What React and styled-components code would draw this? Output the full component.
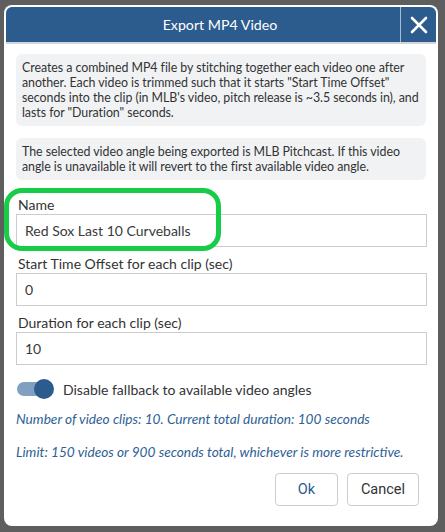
import React from 'react';
import styled, { createGlobalStyle } from 'styled-components';

const Global = createGlobalStyle`
  html, body {
    margin: 0;
    padding: 0;
    background: #5e5e5e;
    font-family: Lato, "Open Sans", sans-serif;
  }
  * { box-sizing: border-box; }
`;

const Page = styled.div`
  position: relative;
  width: 445px;
  height: 532px;
  padding: 5px 7px 6px 4px;
`;

const Dialog = styled.div`
  width: 434px;
  height: 521px;
  background: #fff;
  border-radius: 8px;
  padding: 2px;
  display: flex;
  flex-direction: column;
`;

const Header = styled.div`
  height: 37px;
  background: #2c5b8e;
  border-radius: 6px 6px 0 0;
  border-bottom: 2px solid #d2d6dc;
  display: flex;
  align-items: stretch;
  color: #fff;
`;

const Title = styled.div`
  flex: 1;
  display: flex;
  align-items: center;
  justify-content: center;
  font-size: 14.2px;
  padding-left: 34px;
`;

const Close = styled.div`
  width: 36px;
  border-left: 1px solid #a9bbd0;
  display: flex;
  align-items: center;
  justify-content: center;
`;

const Body = styled.div`
  padding: 10px 10px 0 10px;
  display: flex;
  flex-direction: column;
`;

const Note = styled.div`
  background: #f1f2f4;
  border-radius: 6px;
  padding: 6px 2px 6px 6px;
  font-size: 12.4px;
  letter-spacing: -0.05px;
  line-height: 15px;
  color: #333;
  margin-bottom: ${p => p.gap || 12}px;
`;

const Label = styled.div`
  font-size: 14px;
  color: #333;
  margin: 0 0 1px 2px;
  line-height: 17px;
`;

const Input = styled.input`
  width: 411px;
  height: 33px;
  border: 1px solid #ccc;
  border-radius: 0;
  padding: 0 8px;
  font-family: Lato, sans-serif;
  font-size: 14px;
  color: #3a3a3a;
  margin-bottom: 8px;
  outline: none;
`;

const ToggleRow = styled.label`
  display: flex;
  align-items: center;
  gap: 10px;
  height: 20px;
  font-size: 14px;
  color: #333;
  margin: 6px 0 12px 1px;
`;

const Track = styled.span`
  position: relative;
  width: 36px;
  height: 14px;
  border-radius: 7px;
  background: #819fbf;
  display: inline-block;
`;

const Knob = styled.span`
  position: absolute;
  right: -1px;
  top: -3px;
  width: 20px;
  height: 20px;
  border-radius: 50%;
  background: #2c5b8e;
`;

const Info = styled.div`
  font-size: 13.7px;
  font-style: italic;
  color: #2f5f95;
  line-height: 16px;
  margin-bottom: 17px;
`;

const Actions = styled.div`
  display: flex;
  justify-content: flex-end;
  gap: 9px;
  padding-right: 7px;
  margin-top: -4px;
`;

const Button = styled.button`
  width: ${p => p.w}px;
  height: 33px;
  padding: 0;
  background: #fff;
  border: 1px solid #ccc;
  border-radius: 4px;
  font-family: Roboto, "Liberation Sans", sans-serif;
  font-size: 14.5px;
  color: ${p => (p.primary ? '#2c5b8e' : '#333')};
`;

const Highlight = styled.div`
  position: absolute;
  left: 4px;
  top: 188px;
  width: 217px;
  height: 63px;
  border: 5px solid #17cc47;
  border-radius: 18px;
  pointer-events: none;
`;

export default function App() {
  return (
    <Page>
      <Global />
      <Dialog>
        <Header>
          <Title>Export MP4 Video</Title>
          <Close>
            <svg width="18" height="18" viewBox="0 0 18 18">
              <path d="M2 2 L16 16 M16 2 L2 16" stroke="#fff" strokeWidth="2.6" strokeLinecap="round" />
            </svg>
          </Close>
        </Header>
        <Body>
          <Note>
            Creates a combined MP4 file by stitching together each video one after another. Each video is trimmed such that it starts "Start Time Offset" seconds into the clip (in MLB's video, pitch release is ~3.5 seconds in), and lasts for "Duration" seconds.
          </Note>
          <Note gap={16}>
            The selected video angle being exported is MLB Pitchcast. If this video angle is unavailable it will revert to the first available video angle.
          </Note>
          <Label>Name</Label>
          <Input defaultValue="Red Sox Last 10 Curveballs" />
          <Label>Start Time Offset for each clip (sec)</Label>
          <Input defaultValue="0" />
          <Label>Duration for each clip (sec)</Label>
          <Input defaultValue="10" />
          <ToggleRow>
            <Track><Knob /></Track>
            Disable fallback to available video angles
          </ToggleRow>
          <Info>Number of video clips: 10. Current total duration: 100 seconds</Info>
          <Info>Limit: 150 videos or 900 seconds total, whichever is more restrictive.</Info>
          <Actions>
            <Button primary w={63}>Ok</Button>
            <Button w={72}>Cancel</Button>
          </Actions>
        </Body>
      </Dialog>
      <Highlight />
    </Page>
  );
}
